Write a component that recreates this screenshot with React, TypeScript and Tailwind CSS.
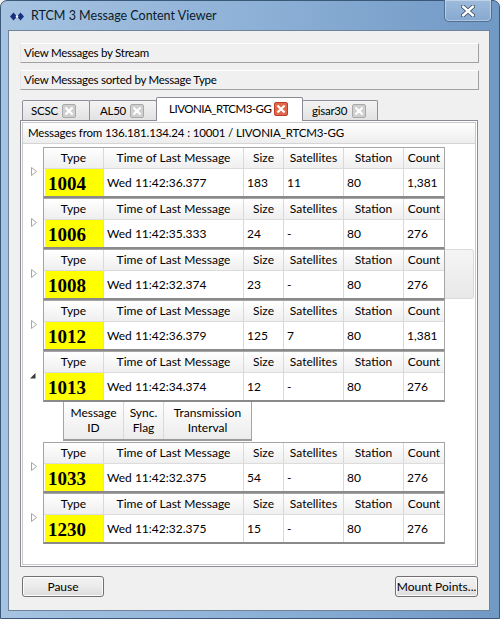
import React from "react";

type Row = {
  type: string;
  time: string;
  size: string;
  sats: string;
  station: string;
  count: string;
  expanded?: boolean;
  hover?: boolean;
};

const rows: Row[] = [
  { type: "1004", time: "Wed 11:42:36.377", size: "183", sats: "11", station: "80", count: "1,381" },
  { type: "1006", time: "Wed 11:42:35.333", size: "24", sats: "-", station: "80", count: "276" },
  { type: "1008", time: "Wed 11:42:32.374", size: "23", sats: "-", station: "80", count: "276", hover: true },
  { type: "1012", time: "Wed 11:42:36.379", size: "125", sats: "7", station: "80", count: "1,381" },
  { type: "1013", time: "Wed 11:42:34.374", size: "12", sats: "-", station: "80", count: "276", expanded: true },
  { type: "1033", time: "Wed 11:42:32.375", size: "54", sats: "-", station: "80", count: "276" },
  { type: "1230", time: "Wed 11:42:32.375", size: "15", sats: "-", station: "80", count: "276" },
];

function CloseIcon({ active }: { active?: boolean }) {
  return (
    <svg width="14" height="14" viewBox="0 0 14 14" className="shrink-0">
      <rect
        x="0.5"
        y="0.5"
        width="13"
        height="13"
        rx="1.5"
        fill={active ? "#e2674a" : "#cfcfcf"}
        stroke={active ? "#b8402a" : "#a9a9a9"}
      />
      <path d="M4.2 4.2 L9.8 9.8 M9.8 4.2 L4.2 9.8" stroke="#ffffff" strokeWidth="2.2" strokeLinecap="square" />
    </svg>
  );
}

function Tab({
  label,
  active,
  w,
  pl,
  pr,
  first,
}: {
  label: string;
  active?: boolean;
  w: string;
  pl: string;
  pr: string;
  first?: boolean;
}) {
  if (active) {
    return (
      <div
        className={`${w} ${pl} ${pr} -ml-px h-[24px] -mb-px relative z-10 bg-white border border-b-0 border-[#898c95] rounded-t-[2px] flex items-center justify-between pb-[1px] whitespace-nowrap tracking-[-0.5px]`}
      >
        <span>{label}</span>
        <CloseIcon active />
      </div>
    );
  }
  return (
    <div
      className={`${w} ${pl} ${pr} ${first ? "" : "-ml-px"} h-[20px] bg-gradient-to-b from-[#f4f4f4] to-[#e2e2e2] border border-b-0 border-[#8d9096] rounded-t-[2px] flex items-center justify-between whitespace-nowrap`}
    >
      <span>{label}</span>
      <CloseIcon />
    </div>
  );
}

const cols = "grid grid-cols-[60px_140px_40px_60px_60px_40px]";

function HeaderCell({ children, last }: { children: React.ReactNode; last?: boolean }) {
  return (
    <div className={`flex items-center justify-center ${last ? "" : "border-r border-[#d9d9d9]"}`}>{children}</div>
  );
}

function DataCell({ children, last }: { children: React.ReactNode; last?: boolean }) {
  return (
    <div className={`flex items-center pl-[3px] ${last ? "" : "border-r border-[#d9d9d9]"}`}>{children}</div>
  );
}

function Block({ r }: { r: Row }) {
  return (
    <div>
      <div className="flex h-[51px]">
        <div className="w-[20px] shrink-0">
          {r.expanded ? (
            <div className="pl-[7px] pt-[22px]">
              <svg width="6" height="6" viewBox="0 0 6 6">
                <polygon points="5.5,0 5.5,5.5 0,5.5" fill="#3c3c3c" />
              </svg>
            </div>
          ) : (
            <div className="pl-[8px] pt-[20px]">
              <svg width="7" height="9" viewBox="0 0 7 9">
                <polygon points="0.5,0.5 5.5,4.5 0.5,8.5" fill="#ffffff" stroke="#a6a6a6" strokeWidth="1" />
              </svg>
            </div>
          )}
        </div>
        <div className="w-[402px] shrink-0 border border-[#a5a5a5] border-b-2 border-b-[#8a8a8a] flex flex-col">
          <div className={`${cols} h-[21px] border-b border-[#dcdcdc] bg-gradient-to-b from-[#ffffff] to-[#efefef]`}>
            <HeaderCell>Type</HeaderCell>
            <HeaderCell>Time of Last Message</HeaderCell>
            <HeaderCell>Size</HeaderCell>
            <HeaderCell>Satellites</HeaderCell>
            <HeaderCell>Station</HeaderCell>
            <HeaderCell last>Count</HeaderCell>
          </div>
          <div className={`${cols} h-[27px] bg-white`}>
            <div className="flex items-center border-r border-[#d9d9d9] pl-px">
              <div className="h-full w-full bg-[#ffff00] flex items-center pl-[3px] pt-[1px] font-['Liberation_Serif',serif] font-bold text-[19px] leading-none">
                {r.type}
              </div>
            </div>
            <DataCell>{r.time}</DataCell>
            <DataCell>{r.size}</DataCell>
            <DataCell>{r.sats}</DataCell>
            <DataCell>{r.station}</DataCell>
            <DataCell last>{r.count}</DataCell>
          </div>
        </div>
        {r.hover ? (
          <div className="flex-1 mr-[1px] bg-gradient-to-b from-[#f5f5f5] to-[#e8e8e8] border border-l-0 border-[#dadada] rounded-r-[3px] h-[50px]" />
        ) : (
          <div className="flex-1" />
        )}
      </div>
      {r.expanded && (
        <div className="flex mb-[1px]">
          <div className="w-[40px] shrink-0" />
          <div className="grid grid-cols-[60px_40px_87px] h-[39px] border-l border-r border-b-2 border-[#a5a5a5] border-b-[#9a9a9a] bg-gradient-to-b from-[#ffffff] to-[#ececec] leading-[15px] text-center">
            <div className="border-r border-[#d9d9d9] pt-[3px]">
              Message
              <br />
              ID
            </div>
            <div className="border-r border-[#d9d9d9] pt-[3px]">
              Sync.
              <br />
              Flag
            </div>
            <div className="pt-[3px]">
              Transmission
              <br />
              Interval
            </div>
          </div>
        </div>
      )}
    </div>
  );
}

function GroupBar({ children }: { children: React.ReactNode }) {
  return (
    <div className="h-[20px] flex items-center pl-[3px] border border-t-white border-l-[#e6e6e6] border-b-[#a0a0a0] border-r-[#a0a0a0] bg-[#f0f0f0] text-[11.5px] tracking-[-0.25px]">
      {children}
    </div>
  );
}

function Button({ children, w }: { children: React.ReactNode; w: string }) {
  return (
    <div
      className={`${w} h-[21px] rounded-[3px] border border-[#707070] bg-gradient-to-b from-[#f2f2f2] via-[#ebebeb] to-[#dcdcdc] flex items-center justify-center shadow-[inset_0_0_0_1px_#fcfcfc] whitespace-nowrap`}
    >
      {children}
    </div>
  );
}

export default function App() {
  return (
    <div className="w-[500px] h-[619px] overflow-hidden bg-[#f0f0f0]">
      <div className="w-[500px] h-[619px] flex flex-col border border-[#3a5878] rounded-t-[7px] bg-gradient-to-r from-[#a6c3e1] via-[#8eb1d7] to-[#7199c5] font-['Lato',sans-serif] text-[12px] text-black">
        {/* title bar */}
        <div className="h-[29px] shrink-0 flex items-start justify-between">
          <div className="flex items-center h-[29px] pl-[9px] pt-[2px]">
            <svg width="14" height="9" viewBox="0 0 14 9">
              <polygon points="0,4.5 3.5,0.5 7,4.5 3.5,8.5" fill="#17307f" />
              <polygon points="7,4.5 10.5,0.5 14,4.5 10.5,8.5" fill="#17307f" />
              <polygon points="5.5,4.5 7,3 8.5,4.5 7,6" fill="#ffffff" />
            </svg>
            <span className="ml-[7px] text-[12.5px] text-[#0b1a2a]">RTCM 3 Message Content Viewer</span>
          </div>
          <div className="mr-[7px] -mt-px w-[48px] h-[22px] rounded-b-[5px] border border-t-0 border-[#4f6e92] bg-gradient-to-b from-[#9ebbdb] to-[#86a9d0] shadow-[inset_0_0_0_1px_rgba(255,255,255,0.35)] flex items-center justify-center">
            <svg width="14" height="12" viewBox="0 0 14 12">
              <path d="M2 1.5 L12 10.5 M12 1.5 L2 10.5" stroke="#34495f" strokeWidth="4" strokeLinecap="round" />
              <path d="M2 1.5 L12 10.5 M12 1.5 L2 10.5" stroke="#ffffff" strokeWidth="2.4" strokeLinecap="round" />
            </svg>
          </div>
        </div>

        {/* client */}
        <div className="ml-[7px] mr-[9px] h-[581px] shrink-0 border border-[#6f839b] bg-[#f0f0f0] pl-[11px] pr-[10px] pt-[12px] flex flex-col">
          <GroupBar>View Messages by Stream</GroupBar>
          <div className="mt-[7px]">
            <GroupBar>View Messages sorted by Message Type</GroupBar>
          </div>

          {/* tabs */}
          <div className="mt-[7px] h-[23px] flex items-end pl-[2px] text-[11.5px] tracking-[-0.25px]">
            <Tab label="SCSC" w="w-[68px]" pl="pl-[8px]" pr="pr-[13px]" first />
            <Tab label="AL50" w="w-[68px]" pl="pl-[10px]" pr="pr-[12px]" />
            <Tab label="LIVONIA_RTCM3-GG" active w="w-[147px]" pl="pl-[12px]" pr="pr-[14px]" />
            <Tab label="gisar30" w="w-[76px]" pl="pl-[9px]" pr="pr-[11px]" />
          </div>

          {/* pane */}
          <div className="w-[458px] h-[447px] border border-[#898c95] bg-white p-px">
            <div className="h-full border border-[#c9c9c9] flex flex-col">
              <div className="h-[21px] shrink-0 border-b border-[#d5d5d5] bg-gradient-to-b from-[#ffffff] to-[#ededed] flex items-center pl-[5px] text-[11.5px] tracking-[-0.15px]">
                Messages from 136.181.134.24 : 10001 / LIVONIA_RTCM3-GG
              </div>
              <div className="flex-1 bg-white pt-[3px]">
                {rows.map((r) => (
                  <Block key={r.type} r={r} />
                ))}
              </div>
            </div>
          </div>

          {/* buttons */}
          <div className="mt-[9px] flex justify-between pl-[2px] pr-[1px]">
            <Button w="w-[82px]">Pause</Button>
            <Button w="w-[83px]">Mount Points...</Button>
          </div>
        </div>
      </div>
    </div>
  );
}
